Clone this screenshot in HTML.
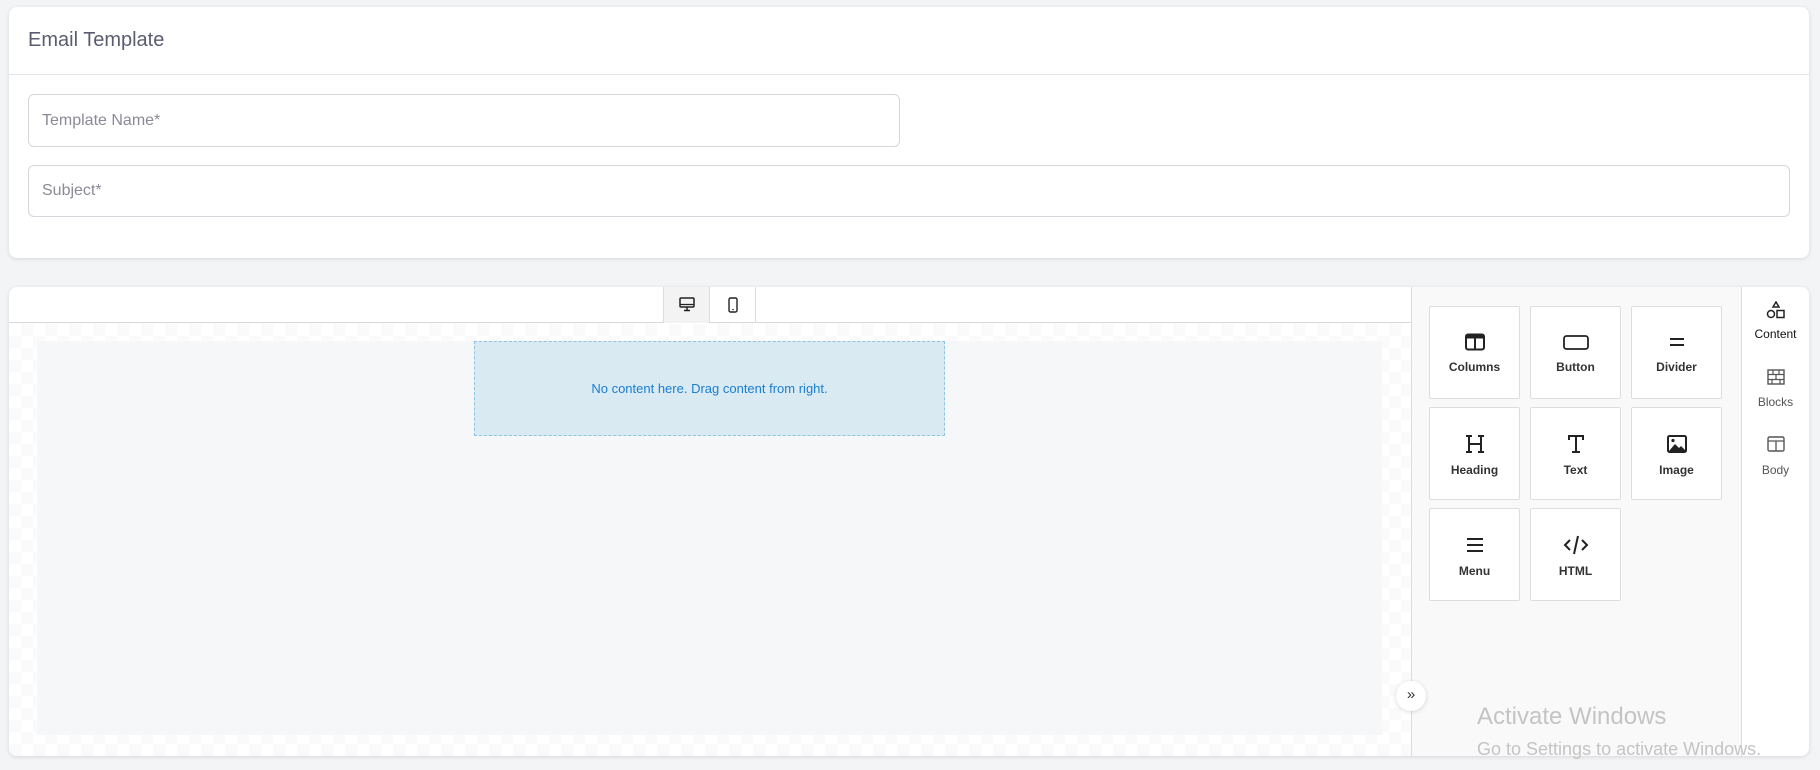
<!DOCTYPE html>
<html><head><meta charset="utf-8"><style>
*{box-sizing:border-box;margin:0;padding:0}
body{width:1820px;height:770px;background:#f3f4f6;font-family:"Liberation Sans",sans-serif;position:relative;overflow:hidden}
.card{position:absolute;background:#fff;border-radius:8px;box-shadow:0 1px 4px rgba(0,0,0,.12)}
.inp{position:absolute;border:1px solid #d6d6dc;border-radius:6px;color:#8a8a98;font-size:16px;padding-left:13px;display:flex;align-items:center}
.tile{position:absolute;width:91px;height:93px;background:#fff;border:1px solid #ddd;border-radius:2px;display:flex;flex-direction:column;align-items:center;font-size:12px;font-weight:bold;color:#333}
.tile svg{margin-top:26px;margin-bottom:9px}
.tab{position:absolute;left:1742px;width:67px;text-align:center;font-size:12px;color:#555}
</style></head><body>
<div class="card" style="left:9px;top:7px;width:1800px;height:251px">
 <div style="position:absolute;left:19px;top:22px;font-size:20px;color:#5a5c70">Email Template</div>
 <div style="position:absolute;left:0;right:0;top:67px;border-top:1px solid #e4e4e8"></div>
 <div class="inp" style="left:19px;top:87px;width:872px;height:53px">Template Name*</div>
 <div class="inp" style="left:19px;top:158px;width:1762px;height:52px">Subject*</div>
</div>
<div class="card" style="left:9px;top:287px;width:1800px;height:469px;overflow:hidden">
 <div style="position:absolute;left:0;top:0;width:1402px;height:36px;border-bottom:1px solid #d8d8d8;background:#fff"></div>
 <div style="position:absolute;left:654px;top:0;width:47px;height:36px;background:#f3f3f3;border-left:1px solid #ddd;border-right:1px solid #ddd"><svg style="position:absolute;left:15px;top:10px" width="16" height="15" viewBox="0 0 16 15"><rect x="1" y="1" width="14" height="9" rx="1" fill="none" stroke="#222" stroke-width="1.5"/><line x1="1" y1="7.5" x2="15" y2="7.5" stroke="#222" stroke-width="1.2"/><path d="M8 10v3M5 13.5h6" stroke="#222" stroke-width="1.5"/></svg></div>
 <div style="position:absolute;left:701px;top:0;width:46px;height:36px;border-right:1px solid #ddd"><svg style="position:absolute;left:18px;top:10px" width="10" height="16" viewBox="0 0 10 16"><rect x="1" y="1" width="8" height="14" rx="1.5" fill="none" stroke="#222" stroke-width="1.4"/><circle cx="5" cy="12.5" r=".8" fill="#222"/></svg></div>
 <div style="position:absolute;left:0;top:37px;width:1402px;height:432px;background:repeating-conic-gradient(#fafafa 0 25%,#fff 0 50%) 0 0/24px 24px"></div>
 <div style="position:absolute;left:28px;top:54px;width:1345px;height:394px;background:#f6f7f9"></div>
 <div style="position:absolute;left:465px;top:54px;width:471px;height:95px;background:#d9eaf3;border:1px dashed #8fc3e6;color:#1a7ed0;font-size:13px;display:flex;align-items:center;justify-content:center">No content here. Drag content from right.</div>
 <div style="position:absolute;left:1402px;top:0;width:331px;height:469px;background:#f9f9f9;border-left:1px solid #ddd;border-right:1px solid #ddd"></div>
 <div style="position:absolute;left:1387px;top:394px;width:30px;height:30px;border-radius:50%;background:#fff;box-shadow:0 1px 5px rgba(0,0,0,.15);font-size:15px;color:#333;text-align:center;line-height:28px">»</div>
</div>
<div class="tile" style="left:1429px;top:306px"><svg width="20" height="18" viewBox="0 0 20 18"><rect x="1" y="1.5" width="18" height="15" rx="2" fill="none" stroke="#222" stroke-width="2"/><rect x="1" y="1.5" width="18" height="4" fill="#222"/><line x1="10" y1="2" x2="10" y2="16" stroke="#222" stroke-width="2"/></svg>Columns</div>
<div class="tile" style="left:1530px;top:306px"><svg width="26" height="18" viewBox="0 0 26 18"><rect x="1" y="3" width="24" height="13" rx="2.5" fill="none" stroke="#222" stroke-width="1.8"/></svg>Button</div>
<div class="tile" style="left:1631px;top:306px"><svg width="18" height="18" viewBox="0 0 18 18"><path d="M2 6h14M2 12h14" stroke="#222" stroke-width="2"/></svg>Divider</div>
<div class="tile" style="left:1429px;top:407px"><svg width="20" height="20" viewBox="0 0 20 20"><path d="M4 2v16M16 2v16M4 10h12M1 2h6M13 2h6M1 18h6M13 18h6" stroke="#222" stroke-width="2"/></svg>Heading</div>
<div class="tile" style="left:1530px;top:407px"><svg width="20" height="20" viewBox="0 0 20 20"><path d="M3 6V2h14v4M10 2v16M6 18h8" stroke="#222" stroke-width="2" fill="none"/></svg>Text</div>
<div class="tile" style="left:1631px;top:407px"><svg width="20" height="20" viewBox="0 0 20 20"><rect x="1" y="2" width="18" height="16" rx="1.5" fill="none" stroke="#222" stroke-width="2"/><path d="M2 17l6-7 4 4 2-2 5 5z" fill="#222"/><circle cx="6" cy="6.5" r="1.6" fill="#222"/></svg>Image</div>
<div class="tile" style="left:1429px;top:508px"><svg width="20" height="20" viewBox="0 0 20 20"><path d="M2 4h16M2 10h16M2 16h16" stroke="#222" stroke-width="2"/></svg>Menu</div>
<div class="tile" style="left:1530px;top:508px"><svg width="26" height="20" viewBox="0 0 26 20"><path d="M7 5l-5 5 5 5M19 5l5 5-5 5M15 1l-4 18" stroke="#222" stroke-width="2" fill="none"/></svg>HTML</div>
<div class="tab" style="top:287px;height:68px;background:#fff;color:#111;border-top-right-radius:8px"><svg style="margin-top:14px" width="20" height="18" viewBox="0 0 20 18"><path d="M10 1l3 5H7z" fill="none" stroke="#222" stroke-width="1.5"/><circle cx="5" cy="13" r="3.5" fill="none" stroke="#222" stroke-width="1.5"/><rect x="11" y="9.5" width="7" height="7" fill="none" stroke="#222" stroke-width="1.5"/></svg><div style="margin-top:5px">Content</div></div>
<div class="tab" style="top:369px"><svg width="18" height="16" viewBox="0 0 18 16"><rect x="1" y="1" width="16" height="14" fill="none" stroke="#555" stroke-width="1.4"/><path d="M1 5.5h16M1 10.5h16M6 1v4.5M12 1v4.5M9 5.5v5M5 10.5v4.5M13 10.5v4.5" stroke="#555" stroke-width="1.2"/></svg><div style="margin-top:7px">Blocks</div></div>
<div class="tab" style="top:436px"><svg width="18" height="16" viewBox="0 0 18 16"><rect x="1" y="1" width="16" height="14" rx="1.5" fill="none" stroke="#555" stroke-width="1.4"/><path d="M1 5h16M9 5v10" stroke="#555" stroke-width="1.3"/></svg><div style="margin-top:8px">Body</div></div>
<div style="position:absolute;left:1477px;top:703px;font-size:24px;color:#c4c4c4">Activate Windows</div>
<div style="position:absolute;left:1477px;top:739px;font-size:18px;color:#c4c4c4">Go to Settings to activate Windows.</div>
</body></html>
